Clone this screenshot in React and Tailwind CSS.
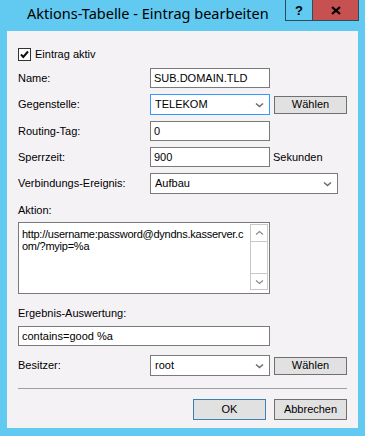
import React from 'react';

const Chevron = () => (
    <svg width="9" height="6" viewBox="0 0 9 6" className="shrink-0">
        <path d="M1 1.5 L4.5 4.5 L8 1.5" fill="none" stroke="#6d6d6d" strokeWidth="1.6" />
    </svg>
);

const TextBox = ({ value, className = '' }) => (
    <div className={`h-[20px] bg-white border border-[#7a7a7a] flex items-center pl-[3px] ${className}`}>
        {value}
    </div>
);

const Combo = ({ value, focused, className = '' }) => (
    <div
        className={`h-[21px] bg-white border flex items-center justify-between pl-[4px] pr-[5px] ${
            focused ? 'border-[#3399ff]' : 'border-[#7a7a7a]'
        } ${className}`}
    >
        <span>{value}</span>
        <Chevron />
    </div>
);

const Button = ({ children, primary, className = '' }) => (
    <div
        className={`w-[73px] bg-[#e1e1e1] border flex items-center justify-center ${
            primary ? 'border-[#3c7fb1]' : 'border-[#707070]'
        } ${className}`}
    >
        {children}
    </div>
);

const Row = ({ label, children, className = '' }) => (
    <div className={`flex items-center ${className}`}>
        <div className="w-[132px] shrink-0">{label}</div>
        {children}
    </div>
);

export default function App() {
    return (
        <div
            className="w-[365px] h-[436px] bg-[#62c9f0] flex flex-col text-[11px] text-black leading-none"
            style={{ fontFamily: '"Liberation Sans", Arial, sans-serif' }}
        >
            {/* title bar */}
            <div className="h-[31px] flex items-start shrink-0">
                <div className="flex-1 pl-[27px] pt-[6px] text-[14.5px]" style={{ fontFamily: '"Noto Sans", sans-serif' }}>
                    Aktions-Tabelle - Eintrag bearbeiten
                </div>
                <div className="flex mr-[6px]">
                    <div className="w-[28px] h-[21px] border border-[#2b4e5c] border-t-0 flex items-center justify-center font-bold text-[13px]">
                        ?
                    </div>
                    <div className="w-[46px] h-[21px] bg-[#c75050] border border-[#2b4e5c] border-t-0 border-l-0 flex items-center justify-center">
                        <svg width="10" height="9" viewBox="0 0 10 9">
                            <path d="M1 1 L9 8 M9 1 L1 8" stroke="#000" strokeWidth="2.2" />
                        </svg>
                    </div>
                </div>
            </div>

            {/* client area */}
            <div className="mx-[7px] h-[397px] bg-[#f5f2f6] pl-[11px] pr-[11px] pt-[17px] flex flex-col">
                <div className="flex items-center h-[13px]">
                    <div className="w-[13px] h-[13px] border border-[#333] bg-white flex items-center justify-center">
                        <svg width="11" height="11" viewBox="0 0 11 11">
                            <path d="M2 5.5 L4.3 8 L9 2.5" fill="none" stroke="#111" strokeWidth="2" />
                        </svg>
                    </div>
                    <span className="ml-[4px]">Eintrag aktiv</span>
                </div>

                <Row label="Name:" className="mt-[7px]">
                    <TextBox value="SUB.DOMAIN.TLD" className="w-[120px]" />
                </Row>

                <Row label="Gegenstelle:" className="mt-[6px]">
                    <Combo value="TELEKOM" focused className="w-[120px] h-[20px]" />
                    <Button className="ml-[4px] h-[18px]">Wählen</Button>
                </Row>

                <Row label="Routing-Tag:" className="mt-[6px]">
                    <TextBox value="0" className="w-[120px]" />
                </Row>

                <Row label="Sperrzeit:" className="mt-[6px]">
                    <TextBox value="900" className="w-[120px]" />
                    <span className="ml-[3px]">Sekunden</span>
                </Row>

                <Row label="Verbindungs-Ereignis:" className="mt-[6px]">
                    <Combo value="Aufbau" className="w-[188px]" />
                </Row>

                <div className="mt-[10px] h-[12px] flex items-center">Aktion:</div>

                <div className="mt-[6px] w-[252px] h-[72px] bg-white border border-[#7a7a7a] flex">
                    <div className="flex-1 min-w-0 overflow-hidden pl-[3px] pt-[5px] leading-[12px] tracking-[-0.25px] whitespace-nowrap">
                        <div>http://username:password@dyndns.kasserver.c</div>
                        <div>om/?myip=%a</div>
                    </div>
                    <div className="w-[18px] shrink-0 mt-[1px] mb-[3px] mr-[1px] border border-[#c8c8c8] flex flex-col justify-between">
                        <div className="h-[17px] border-b border-[#c8c8c8] flex items-center justify-center">
                            <svg width="9" height="6" viewBox="0 0 9 6">
                                <path d="M1 4.5 L4.5 1.5 L8 4.5" fill="none" stroke="#8a8a8a" strokeWidth="1.2" />
                            </svg>
                        </div>
                        <div className="h-[16px] border-t border-[#c8c8c8] flex items-center justify-center">
                            <svg width="9" height="6" viewBox="0 0 9 6">
                                <path d="M1 1.5 L4.5 4.5 L8 1.5" fill="none" stroke="#8a8a8a" strokeWidth="1.2" />
                            </svg>
                        </div>
                    </div>
                </div>

                <div className="mt-[13px] h-[12px] flex items-center">Ergebnis-Auswertung:</div>

                <TextBox value="contains=good %a" className="mt-[7px] w-[252px]" />

                <Row label="Besitzer:" className="mt-[9px]">
                    <Combo value="root" className="w-[120px]" />
                    <Button className="ml-[4px] h-[18px]">Wählen</Button>
                </Row>

                <div className="mt-[12px] h-px bg-[#a0a0a0] w-[329px]" />

                <div className="mt-[10px] flex justify-end w-[329px] gap-[8px]">
                    <Button primary className="h-[21px]">OK</Button>
                    <Button className="h-[21px]">Abbrechen</Button>
                </div>
            </div>
        </div>
    );
}
